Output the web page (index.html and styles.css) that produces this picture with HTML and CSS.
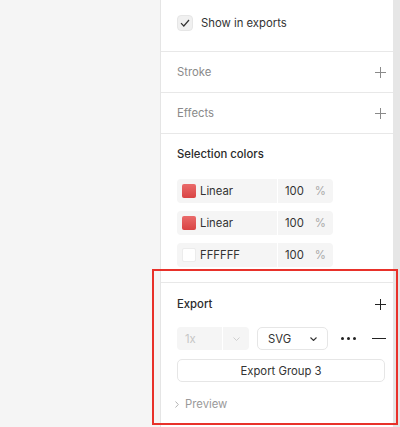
FILE: index.html
```html
<!DOCTYPE html>
<html>
<head>
<meta charset="utf-8">
<link rel="stylesheet" href="styles.css">
</head>
<body>
<div class="canvas"></div>
<div class="panel">
  <section class="sec sec-top">
    <label class="check-row">
      <span class="checkbox">
        <svg width="10" height="8" viewBox="0 0 10 8"><path d="M1 4.2 L3.8 7 L9 1" fill="none" stroke="#333" stroke-width="1.2"/></svg>
      </span>
      <span class="check-label">Show in exports</span>
    </label>
  </section>
  <section class="sec sec-head">
    <span class="muted-title">Stroke</span>
    <span class="plus"></span>
  </section>
  <section class="sec sec-head">
    <span class="muted-title">Effects</span>
    <span class="plus"></span>
  </section>
  <section class="sec sec-colors">
    <div class="title">Selection colors</div>
    <div class="color-list">
      <div class="color-row">
        <div class="color-main"><span class="swatch red"></span><span>Linear</span></div>
        <div class="color-op"><span>100</span><span class="pct">%</span></div>
      </div>
      <div class="color-row">
        <div class="color-main"><span class="swatch red"></span><span>Linear</span></div>
        <div class="color-op"><span>100</span><span class="pct">%</span></div>
      </div>
      <div class="color-row">
        <div class="color-main"><span class="swatch white"></span><span>FFFFFF</span></div>
        <div class="color-op"><span>100</span><span class="pct">%</span></div>
      </div>
    </div>
  </section>
  <section class="sec sec-export">
    <div class="export-head">
      <div class="title">Export</div>
      <span class="plus dark"></span>
    </div>
    <div class="export-row">
      <div class="scale">
        <span class="scale-val">1x</span>
        <span class="scale-chev"><svg width="7" height="4" viewBox="0 0 7 4"><path d="M0.5 0.5 L3.5 3.5 L6.5 0.5" fill="none" stroke="#cfcfcf" stroke-width="1"/></svg></span>
      </div>
      <div class="format">
        <span>SVG</span>
        <svg width="7" height="4" viewBox="0 0 7 4"><path d="M0.5 0.5 L3.5 3.5 L6.5 0.5" fill="none" stroke="#333" stroke-width="1.1"/></svg>
      </div>
      <div class="dots"><i></i><i></i><i></i></div>
      <div class="minus"></div>
    </div>
    <div class="export-btn">Export Group 3</div>
    <div class="preview">
      <svg width="4" height="7" viewBox="0 0 4 7"><path d="M0.5 0.5 L3.3 3.5 L0.5 6.5" fill="none" stroke="#b3b3b3" stroke-width="1"/></svg>
      <span>Preview</span>
    </div>
  </section>
</div>
<div class="scrollbar"></div>
<div class="annotation"></div>
</body>
</html>
```

FILE: styles.css
```css
* { box-sizing: border-box; }
html, body { margin: 0; padding: 0; }
body {
  width: 400px;
  height: 427px;
  overflow: hidden;
  display: flex;
  font-family: Inter, "Noto Sans", sans-serif;
  font-size: 11.3px;
  color: #333;
  background: #fff;
  position: relative;
}
.canvas {
  width: 161px;
  flex: none;
  background: #f5f5f5;
  border-right: 1px solid #e5e5e5;
}
.panel {
  flex: 1;
  background: #fff;
  display: flex;
  flex-direction: column;
}
.scrollbar {
  width: 7px;
  flex: none;
  background: #e6e6e6;
}
.sec {
  border-bottom: 1px solid #e8e8e8;
  padding: 0 7px 0 16px;
}
.sec-top {
  height: 52px;
  display: flex;
  align-items: center;
}
.check-row {
  display: flex;
  align-items: center;
  gap: 8px;
  margin-top: -5px;
}
.checkbox {
  width: 16px;
  height: 16px;
  border-radius: 4px;
  background: #f0f0f0;
  border: 1px solid #e6e6e6;
  display: flex;
  align-items: center;
  justify-content: center;
}
.check-label { color: #333; }
.sec-head {
  height: 41px;
  display: flex;
  align-items: center;
  justify-content: space-between;
}
.muted-title { color: #8a8a8a; }
.plus {
  width: 11px;
  height: 11px;
  position: relative;
}
.plus::before, .plus::after {
  content: "";
  position: absolute;
  background: #8a8a8a;
}
.plus::before { left: 5px; top: 0; width: 1px; height: 11px; }
.plus::after { top: 5px; left: 0; height: 1px; width: 11px; }
.plus.dark::before, .plus.dark::after { background: #222; }
.title { font-weight: 500; color: #2b2b2b; }
.sec-colors {
  height: 149px;
  padding-top: 13px;
}
.color-list {
  margin-top: 18px;
  display: flex;
  flex-direction: column;
  gap: 8px;
}
.color-row {
  display: flex;
  height: 24px;
  width: 156px;
  gap: 1px;
}
.color-main {
  width: 100px;
  background: #f5f5f5;
  border-radius: 4px 0 0 4px;
  display: flex;
  align-items: center;
  gap: 4px;
  padding-left: 5px;
}
.color-op {
  flex: 1;
  background: #f5f5f5;
  border-radius: 0 4px 4px 0;
  display: flex;
  align-items: center;
  padding-left: 7px;
  gap: 11px;
}
.pct { color: #a8a8a8; }
.swatch {
  width: 14px;
  height: 14px;
  border-radius: 2px;
}
.swatch.red { background: linear-gradient(#ea6b6b, #d94444); }
.swatch.white { background: #fff; border: 1px solid #ececec; }
.sec-export {
  flex: 1;
  border-bottom: none;
  padding-top: 14px;
}
.export-head {
  display: flex;
  justify-content: space-between;
  align-items: center;
}
.export-row {
  margin-top: 16px;
  display: flex;
  align-items: center;
  height: 23px;
}
.scale {
  width: 72px;
  height: 23px;
  background: #f5f5f5;
  border-radius: 4px;
  display: flex;
}
.scale-val {
  width: 46px;
  border-right: 1px solid #fff;
  color: #c6c6c6;
  padding-left: 8px;
  display: flex;
  align-items: center;
}
.scale-chev {
  flex: 1;
  display: flex;
  align-items: center;
  justify-content: center;
}
.format {
  margin-left: 8px;
  width: 71px;
  height: 23px;
  border: 1px solid #e6e6e6;
  border-radius: 5px;
  display: flex;
  align-items: center;
  justify-content: space-between;
  padding: 0 10px 0 10px;
}
.dots {
  margin-left: 13px;
  display: flex;
  gap: 3px;
}
.dots i {
  width: 3px;
  height: 3px;
  border-radius: 50%;
  background: #222;
}
.minus {
  margin-left: 16px;
  width: 14px;
  height: 1px;
  background: #222;
}
.export-btn {
  margin-top: 9px;
  width: 208px;
  height: 23px;
  border: 1px solid #e6e6e6;
  border-radius: 5px;
  display: flex;
  align-items: center;
  justify-content: center;
  color: #333;
}
.preview {
  margin-top: 15px;
  display: flex;
  align-items: center;
  gap: 6px;
  color: #9a9a9a;
  margin-left: -2px;
}
.annotation {
  position: absolute;
  left: 152px;
  top: 269px;
  width: 246px;
  height: 156px;
  border: 2px solid #e8312a;
  pointer-events: none;
}
```
